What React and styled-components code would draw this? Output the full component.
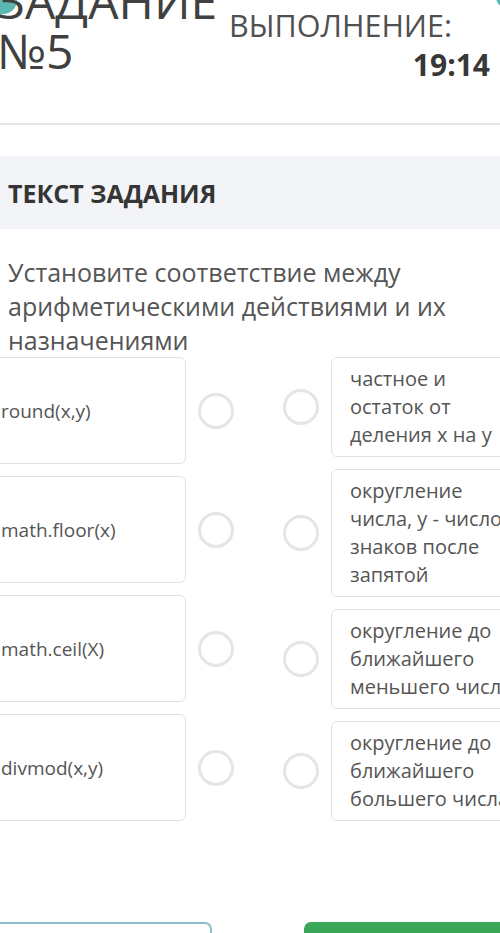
import React from "react";
import styled, { createGlobalStyle } from "styled-components";

const Global = createGlobalStyle`
  html, body { margin: 0; padding: 0; background: #ffffff; overflow: hidden; }
  body { font-family: "Open Sans", "Noto Sans", sans-serif; }
  * { box-sizing: border-box; }
`;

const Page = styled.div`
  position: relative;
  width: 500px;
  height: 933px;
  overflow: hidden;
  background: #ffffff;
`;

const Blob = styled.span`
  position: absolute;
  top: ${(p) => p.$top}px;
  left: ${(p) => p.$left}px;
  width: ${(p) => p.$size}px;
  height: ${(p) => p.$size}px;
  border-radius: 50%;
  background: #5ab7b1;
  z-index: 0;
`;

const Header = styled.header`
  display: flex;
  align-items: flex-start;
  height: 125px;
  border-bottom: 2px solid #e4e4e4;
`;

const Title = styled.h1`
  position: relative;
  z-index: 1;
  margin: -24px 0 0 -3px;
  width: 232px;
  font-size: 48px;
  line-height: 50px;
  font-weight: 400;
  color: #404040;
`;

const Timer = styled.div`
  width: 261px;
  padding-top: 5px;
  display: flex;
  flex-direction: column;
`;

const TimerLabel = styled.span`
  font-size: 30.5px;
  line-height: 40px;
  color: #505050;
`;

const TimerValue = styled.span`
  font-size: 30px;
  line-height: 40px;
  font-weight: 700;
  color: #383838;
  text-align: right;
`;

const Band = styled.div`
  margin-top: 31px;
  height: 73px;
  background: #f3f4f8;
  padding-left: 8px;
  display: flex;
  align-items: center;
`;

const BandTitle = styled.h2`
  margin: 0;
  font-size: 25px;
  font-weight: 700;
  color: #353535;
  line-height: 34px;
`;

const Question = styled.p`
  margin: 26px 0 0;
  padding-left: 8px;
  font-size: 25px;
  line-height: 34px;
  color: #555555;
`;

const MatchArea = styled.div`
  display: flex;
  align-items: stretch;
  gap: 49px;
  width: 541px;
  margin-left: -12px;
`;

const Column = styled.div`
  width: 246px;
  display: flex;
  flex-direction: column;
  gap: 12px;
`;

const LeftRow = styled.div`
  flex: 1;
  display: flex;
  align-items: center;
  gap: 12px;
`;

const RightRow = styled.div`
  display: flex;
  align-items: center;
  gap: 12px;
`;

const Card = styled.div`
  width: 198px;
  border: 1px solid #e1e1e1;
  border-radius: 6px;
  background: #ffffff;
  font-size: 20px;
  line-height: 28px;
  color: #555555;
`;

const LeftCard = styled(Card)`
  align-self: stretch;
  display: flex;
  align-items: center;
  padding-left: 12px;
  font-size: 19px;
`;

const RightCard = styled(Card)`
  width: 202px;
  padding: 7px 14px 7px 18px;
`;

const Radio = styled.span`
  flex-shrink: 0;
  width: 36px;
  height: 36px;
  border-radius: 50%;
  border: 3px solid #e3e6e9;
`;

const Buttons = styled.div`
  display: flex;
  justify-content: space-between;
  width: 540px;
  margin: 101px 0 0 -12px;
`;

const Button = styled.button`
  width: 224px;
  height: 52px;
  border-radius: 7px;
  border: 2px solid ${(p) => (p.$primary ? "#3aa657" : "#8dbfc6")};
  background: ${(p) => (p.$primary ? "#3aa657" : "#ffffff")};
`;

const left = ["round(x,y)", "math.floor(x)", "math.ceil(X)", "divmod(x,y)"];
const right = [
  "частное и остаток от деления х на у",
  "округление числа, у - число знаков после запятой",
  "округление до ближайшего меньшего числа",
  "округление до ближайшего большего числа",
];

export default function App() {
  return (
    <Page>
      <Global />
      <Blob $top={-14} $left={-11} $size={28} />
      <Blob $top={-14} $left={496} $size={22} />
      <Header>
        <Title>
          ЗАДАНИЕ
          <br />
          №5
        </Title>
        <Timer>
          <TimerLabel>ВЫПОЛНЕНИЕ:</TimerLabel>
          <TimerValue>19:14</TimerValue>
        </Timer>
      </Header>
      <Band>
        <BandTitle>ТЕКСТ ЗАДАНИЯ</BandTitle>
      </Band>
      <Question>
        Установите соответствие между арифметическими действиями и их
        назначениями
      </Question>
      <MatchArea>
        <Column>
          {left.map((t) => (
            <LeftRow key={t}>
              <LeftCard>{t}</LeftCard>
              <Radio />
            </LeftRow>
          ))}
        </Column>
        <Column>
          {right.map((t) => (
            <RightRow key={t}>
              <Radio />
              <RightCard>{t}</RightCard>
            </RightRow>
          ))}
        </Column>
      </MatchArea>
      <Buttons>
        <Button />
        <Button $primary />
      </Buttons>
    </Page>
  );
}
